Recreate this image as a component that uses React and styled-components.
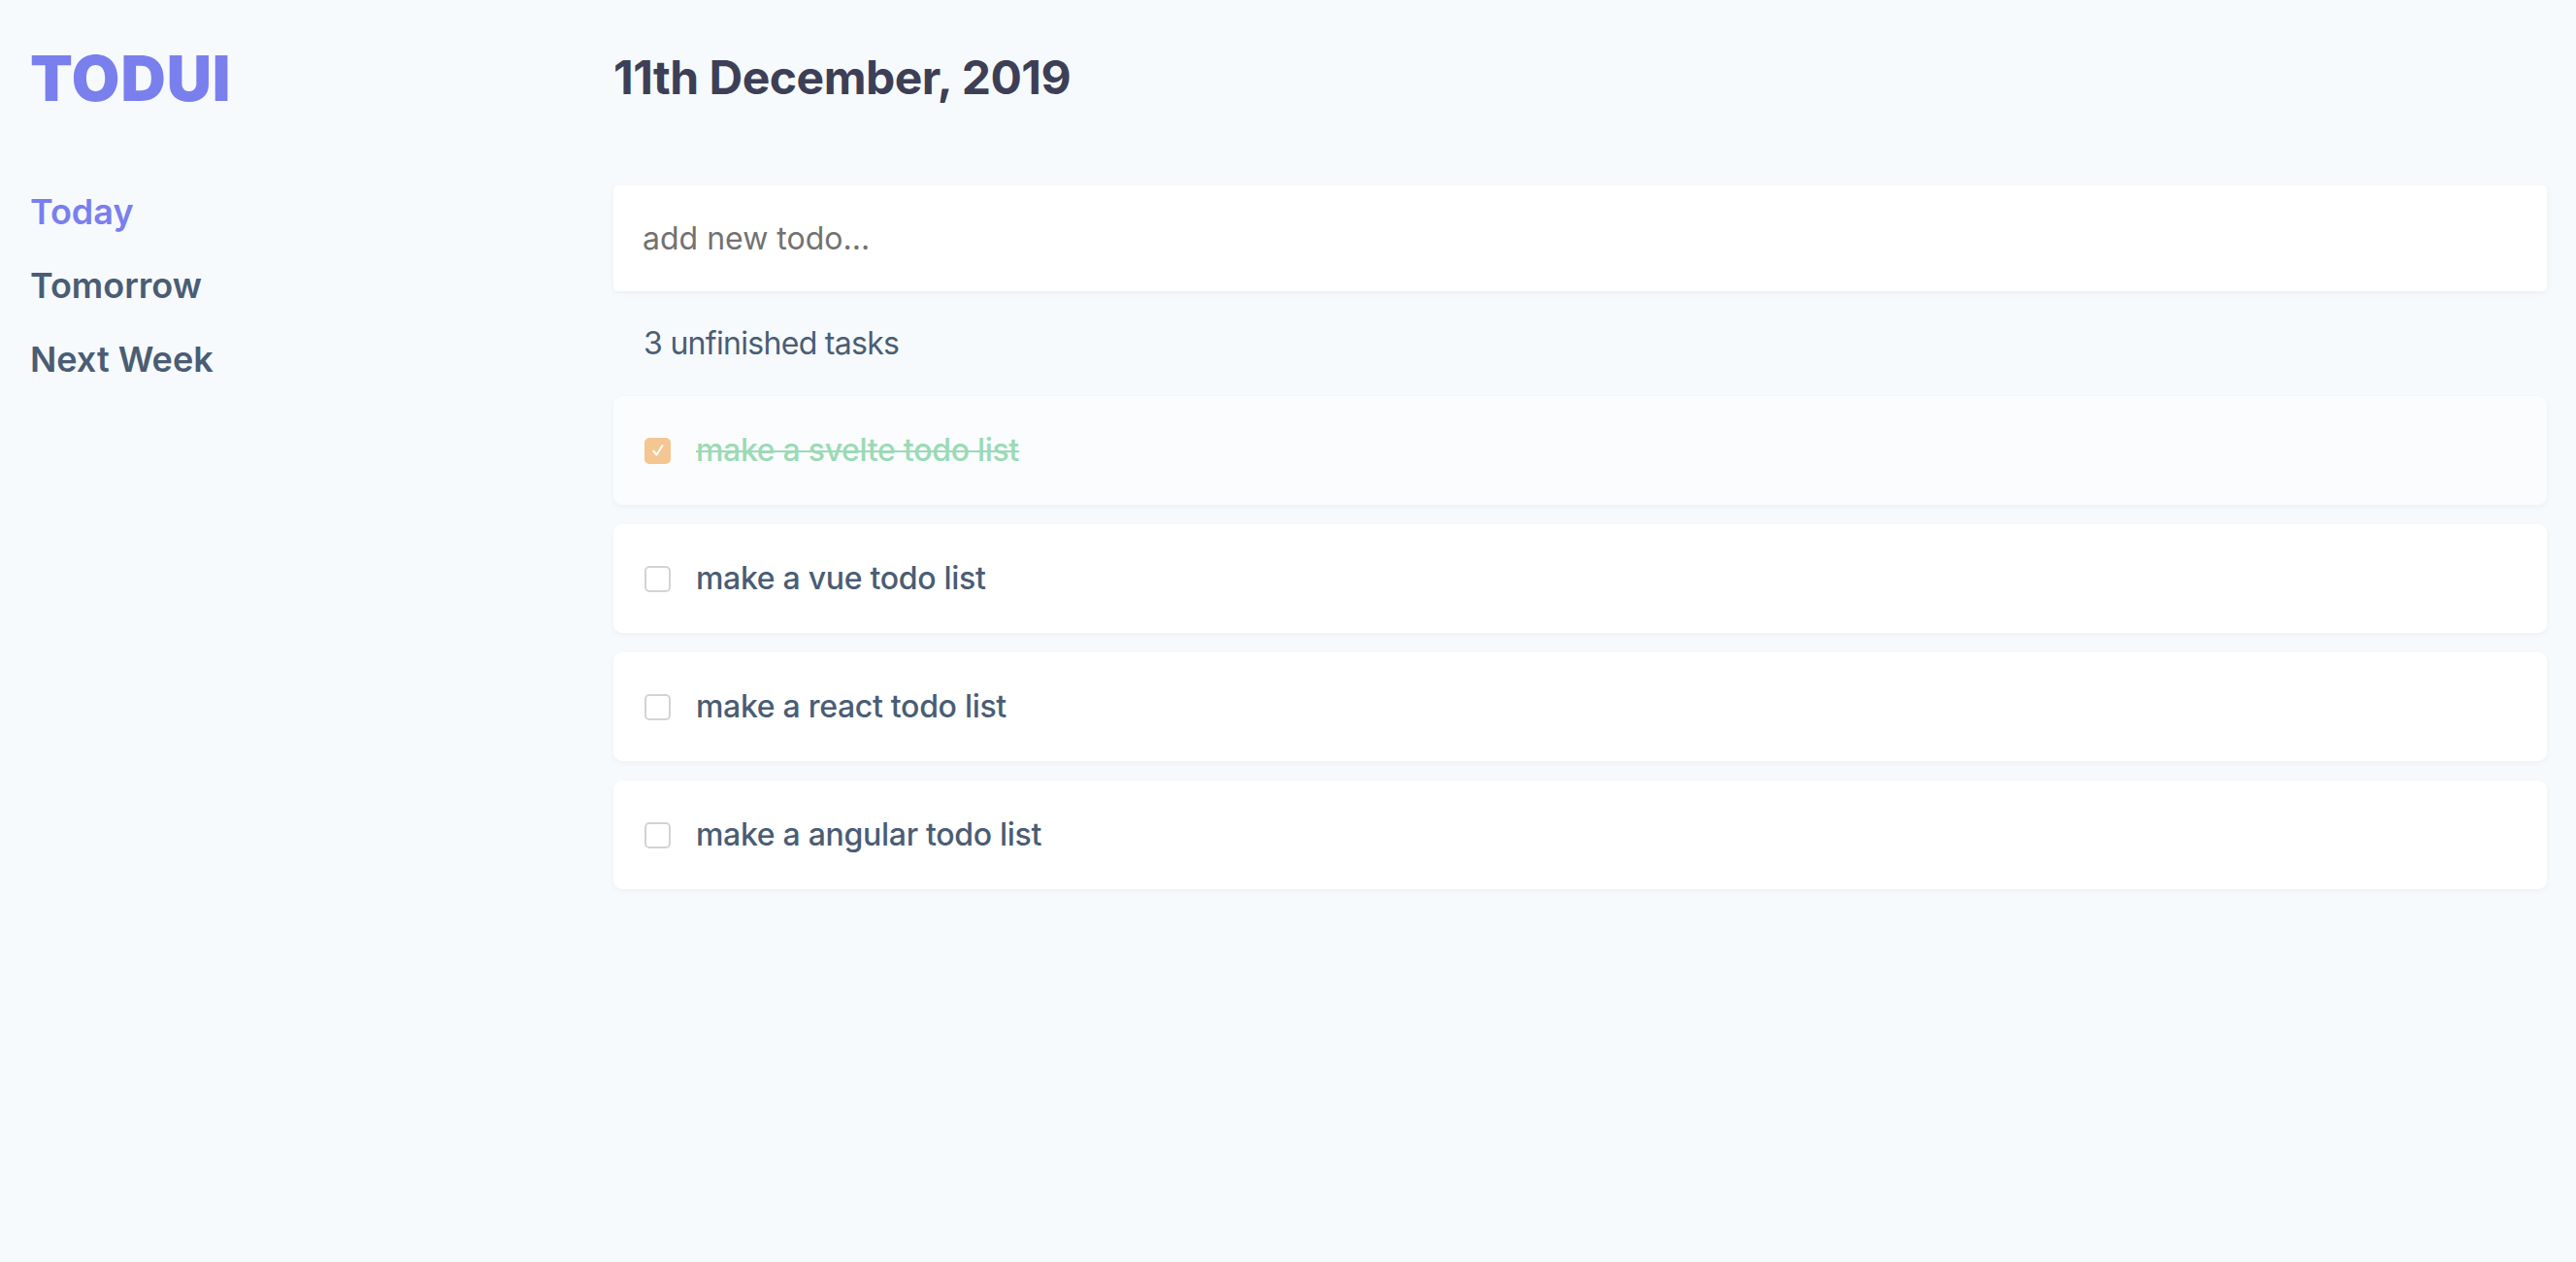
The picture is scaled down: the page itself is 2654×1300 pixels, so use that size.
import React from "react"
import styled, { createGlobalStyle } from 'styled-components'

const todos = [
  { id: 1, text: "make a svelte todo list", done: true },
  { id: 2, text: "make a vue todo list", done: false },
  { id: 3, text: "make a react todo list", done: false },
  { id: 4, text: "make a angular todo list", done: false },
]

const App = () => {
  const unfinished = todos.filter(t => !t.done).length

  return (
    <Layout>
      <GlobalStyle />
      <Sidebar>
        <Logo>TODUI</Logo>
        <Nav>
          <NavItem active>Today</NavItem>
          <NavItem>Tomorrow</NavItem>
          <NavItem>Next Week</NavItem>
        </Nav>
      </Sidebar>
      <Main>
        <Heading>11th December, 2019</Heading>
        <NewTodo placeholder="add new todo..." />
        <Count>{unfinished} unfinished tasks</Count>
        <List>
          {todos.map(todo => (
            <Item key={todo.id} done={todo.done}>
              <Check checked={todo.done}>
                {todo.done && (
                  <svg width="18" height="18" viewBox="0 0 16 16">
                    <path d="M3.8 8.6 L6.6 12 L12 3.6" fill="none" stroke="#fff" strokeWidth="1.8" strokeLinecap="round" strokeLinejoin="round" />
                  </svg>
                )}
              </Check>
              <Label done={todo.done}>{todo.text}</Label>
            </Item>
          ))}
        </List>
      </Main>
    </Layout>
  )
}

const GlobalStyle = createGlobalStyle`
  html, body {
    margin: 0;
    background: #f7fafc;
    font-family: Inter, "Noto Sans", sans-serif;
  }
`

const Layout = styled.div`
  display: flex;
  min-height: 1300px;
  background: #f7fafc;
`

const Sidebar = styled.aside`
  width: 632px;
  flex-shrink: 0;
  padding: 49px 0 0 31px;
  box-sizing: border-box;
`

const Logo = styled.h1`
  margin: 0;
  font-size: 64px;
  line-height: 64px;
  font-weight: 900;
  color: #7a7fee;
  letter-spacing: 1px;
`

const Nav = styled.nav`
  display: flex;
  flex-direction: column;
  gap: 32px;
  margin-top: 83px;
`

const NavItem = styled.a`
  font-size: 36px;
  line-height: 44px;
  font-weight: 600;
  color: ${p => p.active ? '#7a7fee' : '#4a5d74'};
  cursor: pointer;
`

const Main = styled.main`
  flex: 1;
  padding: 56px 30px 0 0;
`

const Heading = styled.h2`
  margin: 0;
  font-size: 48px;
  line-height: 48px;
  font-weight: 700;
  letter-spacing: -0.5px;
  color: #3d3f56;
`

const NewTodo = styled.input`
  display: block;
  width: 100%;
  box-sizing: border-box;
  height: 109px;
  margin-top: 87px;
  padding: 0 30px;
  border: none;
  border-radius: 5px;
  background: #fff;
  box-shadow: 0 2px 6px rgba(0, 0, 0, 0.05);
  font-family: Inter, "Noto Sans", sans-serif;
  font-size: 32px;
  color: #4a5d74;
  outline: none;

  &::placeholder {
    color: #727272;
  }
`

const Count = styled.p`
  margin: 0;
  padding: 34px 31px;
  font-size: 32px;
  line-height: 40px;
  letter-spacing: -0.7px;
  color: #4a5d74;
`

const List = styled.ul`
  list-style: none;
  margin: 0;
  padding: 0;
  display: flex;
  flex-direction: column;
  gap: 20px;
`

const Item = styled.li`
  display: flex;
  align-items: center;
  gap: 26px;
  height: 112px;
  padding: 0 32px;
  border-radius: 9px;
  background: ${p => p.done ? '#fafcfe' : '#fff'};
  box-shadow: 0 2px 6px rgba(0, 0, 0, 0.045);
`

const Check = styled.span`
  display: flex;
  align-items: center;
  justify-content: center;
  width: 27px;
  height: 27px;
  box-sizing: border-box;
  border-radius: 5px;
  border: ${p => p.checked ? 'none' : '2px solid #d3d3d3'};
  background: ${p => p.checked ? '#f4c792' : '#fff'};
`

const Label = styled.span`
  font-size: 32px;
  line-height: 40px;
  font-weight: 500;
  letter-spacing: -0.3px;
  color: ${p => p.done ? '#9bdab5' : '#4a5d74'};
  text-decoration: ${p => p.done ? 'line-through' : 'none'};
  text-decoration-thickness: 2px;
`

export default App
